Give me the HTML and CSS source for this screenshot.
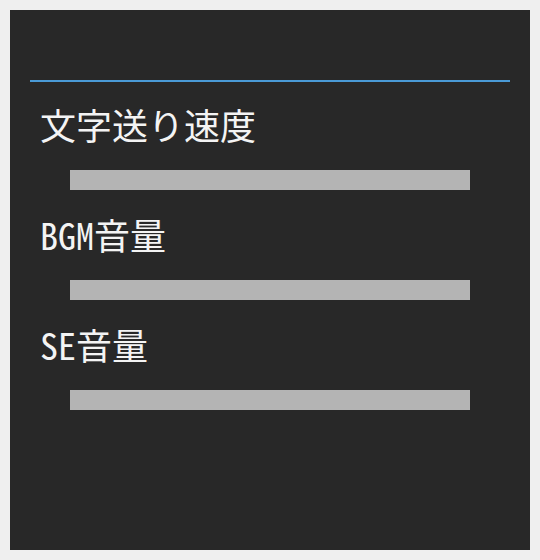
FILE: index.html
```html
<!DOCTYPE html>
<html lang="ja">
<head>
<meta charset="utf-8">
<link rel="stylesheet" href="styles.css">
</head>
<body>
<div class="panel">
  <div class="header"></div>
  <div class="divider"></div>
  <div class="settings">
    <div class="setting">
      <div class="label">文字送り速度</div>
      <div class="bar"></div>
    </div>
    <div class="setting">
      <div class="label">BGM音量</div>
      <div class="bar"></div>
    </div>
    <div class="setting">
      <div class="label">SE音量</div>
      <div class="bar"></div>
    </div>
  </div>
</div>
</body>
</html>
```
FILE: styles.css
```css
html, body {
  margin: 0;
  padding: 0;
  background: #efefef;
}
body {
  padding: 10px;
}
.panel {
  width: 520px;
  height: 540px;
  background: #282828;
  box-sizing: border-box;
  padding: 0 20px;
}
.header {
  height: 70px;
}
.divider {
  height: 2px;
  background: #4a9ad6;
}
.settings {
  display: flex;
  flex-direction: column;
}
.setting {
  display: flex;
  flex-direction: column;
  padding-top: 22px;
}
.setting + .setting {
  padding-top: 24px;
}
.label {
  font-family: "Noto Sans Mono CJK JP", "Noto Sans CJK JP", monospace;
  font-size: 36px;
  line-height: 40px;
  height: 40px;
  color: #f4f4f4;
  padding-left: 10px;
  white-space: nowrap;
}
.bar {
  margin: 26px 0 0 40px;
  width: 400px;
  height: 20px;
  background: #b4b4b4;
}
```
